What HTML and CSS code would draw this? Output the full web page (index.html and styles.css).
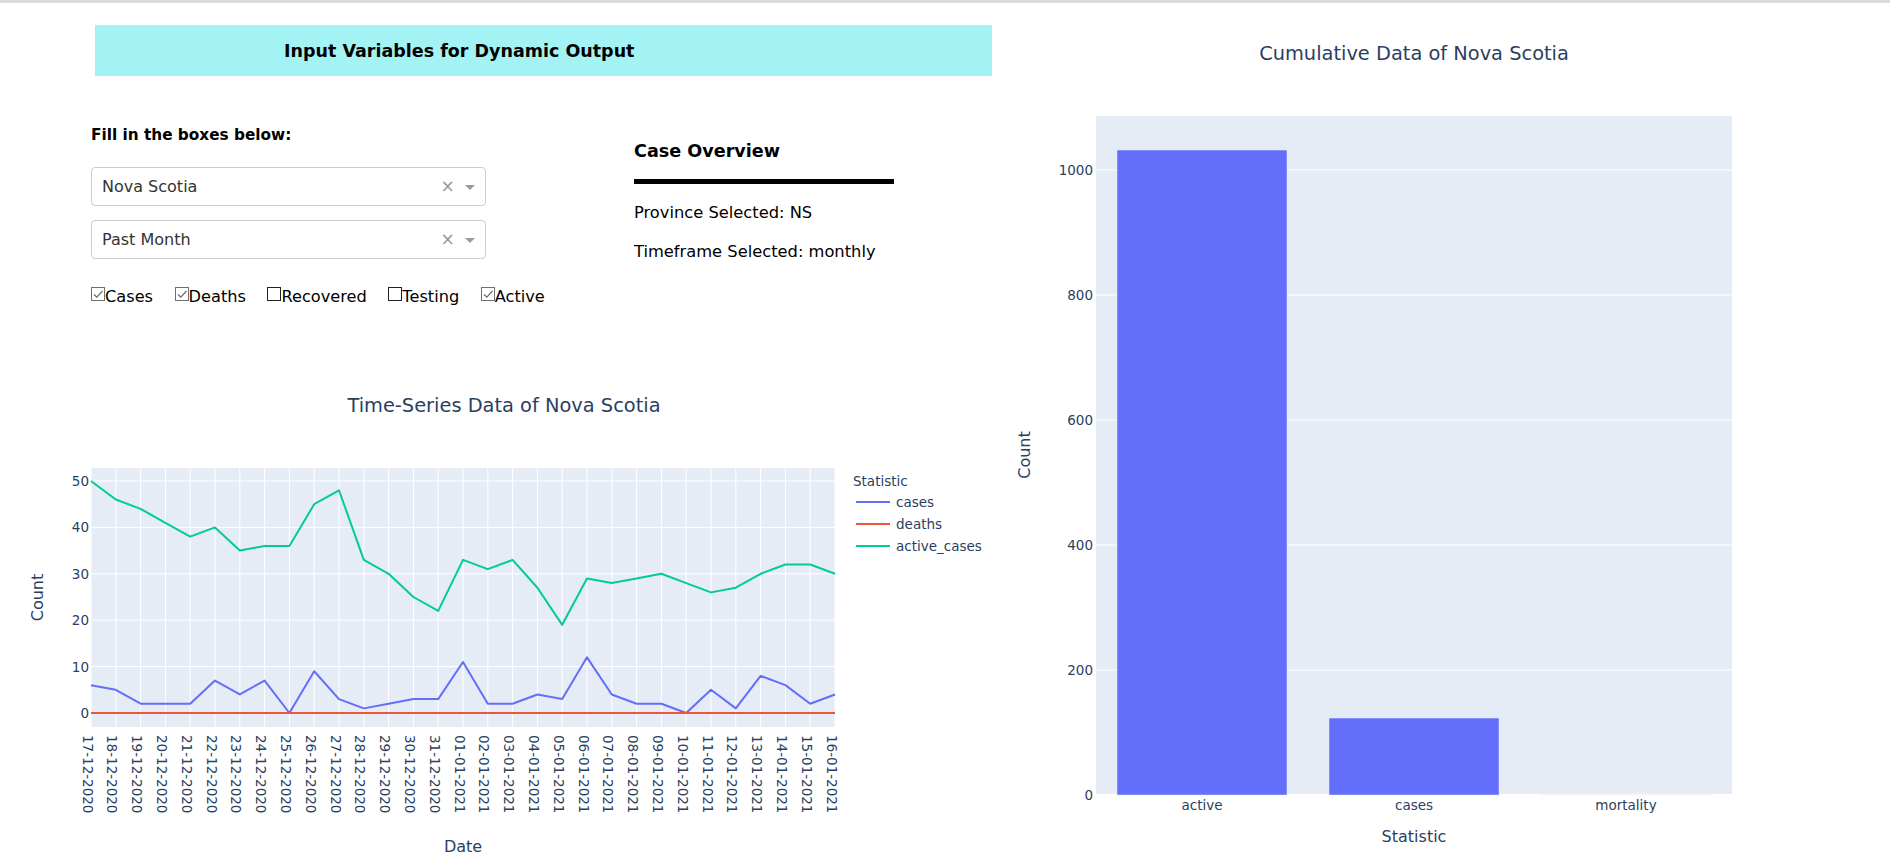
FILE: index.html
```html
<!DOCTYPE html>
<html lang="en">
<head>
<meta charset="utf-8">
<title>Nova Scotia COVID Dashboard</title>
<link rel="stylesheet" href="styles.css">
</head>
<body>
<div class="topbar"></div>
<div class="page">
  <div class="left-col">
    <div class="banner"><h1 class="banner-title">Input Variables for Dynamic Output</h1></div>
    <div class="controls-row">
      <div class="controls">
        <div class="fill-label">Fill in the boxes below:</div>
        <div class="select select-first">
          <span class="select-value">Nova Scotia</span>
          <span class="select-clear">×</span>
          <span class="select-arrow-zone"><span class="select-arrow"></span></span>
        </div>
        <div class="select select-second">
          <span class="select-value">Past Month</span>
          <span class="select-clear">×</span>
          <span class="select-arrow-zone"><span class="select-arrow"></span></span>
        </div>
        <div class="checklist">
          <label class="check-item"><span class="cb-box checked"><svg viewBox="0 0 12 12" class="cb-tick"><polyline points="2,6.5 4.8,9.2 10.5,3"/></svg></span>Cases</label>
          <label class="check-item"><span class="cb-box checked"><svg viewBox="0 0 12 12" class="cb-tick"><polyline points="2,6.5 4.8,9.2 10.5,3"/></svg></span>Deaths</label>
          <label class="check-item"><span class="cb-box"></span>Recovered</label>
          <label class="check-item"><span class="cb-box"></span>Testing</label>
          <label class="check-item"><span class="cb-box checked"><svg viewBox="0 0 12 12" class="cb-tick"><polyline points="2,6.5 4.8,9.2 10.5,3"/></svg></span>Active</label>
        </div>
      </div>
      <div class="overview">
        <h2 class="overview-title">Case Overview</h2>
        <div class="overview-rule"></div>
        <div class="overview-line first">Province Selected: NS</div>
        <div class="overview-line second">Timeframe Selected: monthly</div>
      </div>
    </div>

    <svg class="ts-chart" width="1000" height="500" viewBox="0 363 1000 500" xmlns="http://www.w3.org/2000/svg">
      <text class="plot-title" x="504" y="412" text-anchor="middle">Time-Series Data of Nova Scotia</text>
      <rect class="plot-bg" x="91" y="468" width="744" height="259"/>
      <g transform="translate(91,713) scale(24.8,-4.64)">
        <path class="grid" d="M0,-3.1V52.8M1,-3.1V52.8M2,-3.1V52.8M3,-3.1V52.8M4,-3.1V52.8M5,-3.1V52.8M6,-3.1V52.8M7,-3.1V52.8M8,-3.1V52.8M9,-3.1V52.8M10,-3.1V52.8M11,-3.1V52.8M12,-3.1V52.8M13,-3.1V52.8M14,-3.1V52.8M15,-3.1V52.8M16,-3.1V52.8M17,-3.1V52.8M18,-3.1V52.8M19,-3.1V52.8M20,-3.1V52.8M21,-3.1V52.8M22,-3.1V52.8M23,-3.1V52.8M24,-3.1V52.8M25,-3.1V52.8M26,-3.1V52.8M27,-3.1V52.8M28,-3.1V52.8M29,-3.1V52.8M30,-3.1V52.8"/>
        <path class="grid" d="M0,10H30M0,20H30M0,30H30M0,40H30M0,50H30"/>
        <path class="zeroline" d="M0,0H30"/>
        <polyline class="line-cases" points="0,6 1,5 2,2 3,2 4,2 5,7 6,4 7,7 8,0 9,9 10,3 11,1 12,2 13,3 14,3 15,11 16,2 17,2 18,4 19,3 20,12 21,4 22,2 23,2 24,0 25,5 26,1 27,8 28,6 29,2 30,4"/>
        <polyline class="line-deaths" points="0,0 30,0"/>
        <polyline class="line-active" points="0,50 1,46 2,44 3,41 4,38 5,40 6,35 7,36 8,36 9,45 10,48 11,33 12,30 13,25 14,22 15,33 16,31 17,33 18,27 19,19 20,29 21,28 22,29 23,30 24,28 25,26 26,27 27,30 28,32 29,32 30,30"/>
      </g>
      <g class="tick-text" text-anchor="end">
        <text x="89" y="486">50</text>
        <text x="89" y="532.4">40</text>
        <text x="89" y="578.8">30</text>
        <text x="89" y="625.2">20</text>
        <text x="89" y="671.6">10</text>
        <text x="89" y="718">0</text>
      </g>
      <g class="tick-text">
        <text transform="translate(82.5,735) rotate(90)">17-12-2020</text>
        <text transform="translate(107.3,735) rotate(90)">18-12-2020</text>
        <text transform="translate(132.1,735) rotate(90)">19-12-2020</text>
        <text transform="translate(156.9,735) rotate(90)">20-12-2020</text>
        <text transform="translate(181.7,735) rotate(90)">21-12-2020</text>
        <text transform="translate(206.5,735) rotate(90)">22-12-2020</text>
        <text transform="translate(231.3,735) rotate(90)">23-12-2020</text>
        <text transform="translate(256.1,735) rotate(90)">24-12-2020</text>
        <text transform="translate(280.9,735) rotate(90)">25-12-2020</text>
        <text transform="translate(305.7,735) rotate(90)">26-12-2020</text>
        <text transform="translate(330.5,735) rotate(90)">27-12-2020</text>
        <text transform="translate(355.3,735) rotate(90)">28-12-2020</text>
        <text transform="translate(380.1,735) rotate(90)">29-12-2020</text>
        <text transform="translate(404.9,735) rotate(90)">30-12-2020</text>
        <text transform="translate(429.7,735) rotate(90)">31-12-2020</text>
        <text transform="translate(454.5,735) rotate(90)">01-01-2021</text>
        <text transform="translate(479.3,735) rotate(90)">02-01-2021</text>
        <text transform="translate(504.1,735) rotate(90)">03-01-2021</text>
        <text transform="translate(528.9,735) rotate(90)">04-01-2021</text>
        <text transform="translate(553.7,735) rotate(90)">05-01-2021</text>
        <text transform="translate(578.5,735) rotate(90)">06-01-2021</text>
        <text transform="translate(603.3,735) rotate(90)">07-01-2021</text>
        <text transform="translate(628.1,735) rotate(90)">08-01-2021</text>
        <text transform="translate(652.9,735) rotate(90)">09-01-2021</text>
        <text transform="translate(677.7,735) rotate(90)">10-01-2021</text>
        <text transform="translate(702.5,735) rotate(90)">11-01-2021</text>
        <text transform="translate(727.3,735) rotate(90)">12-01-2021</text>
        <text transform="translate(752.1,735) rotate(90)">13-01-2021</text>
        <text transform="translate(776.9,735) rotate(90)">14-01-2021</text>
        <text transform="translate(801.7,735) rotate(90)">15-01-2021</text>
        <text transform="translate(826.5,735) rotate(90)">16-01-2021</text>
      </g>
      <text class="axis-title" x="463" y="852" text-anchor="middle">Date</text>
      <text class="axis-title" transform="translate(43,597.5) rotate(-90)" text-anchor="middle">Count</text>
      <g class="legend">
        <text class="legend-text" x="853" y="486">Statistic</text>
        <line class="legend-cases" x1="856" y1="502" x2="890" y2="502"/>
        <text class="legend-text" x="896" y="507">cases</text>
        <line class="legend-deaths" x1="856" y1="524" x2="890" y2="524"/>
        <text class="legend-text" x="896" y="529">deaths</text>
        <line class="legend-active" x1="856" y1="546" x2="890" y2="546"/>
        <text class="legend-text" x="896" y="551">active_cases</text>
      </g>
    </svg>
  </div>

  <div class="right-col">
    <svg class="bar-chart" width="890" height="860" viewBox="1000 3 890 860" xmlns="http://www.w3.org/2000/svg">
      <text class="plot-title" x="1414" y="60" text-anchor="middle">Cumulative Data of Nova Scotia</text>
      <rect class="plot-bg" x="1096" y="116" width="636" height="678"/>
      <path class="grid" d="M1096,170H1732M1096,295H1732M1096,420H1732M1096,545H1732M1096,670H1732"/>
      <path class="zeroline-bar" d="M1096,795H1732"/>
      <rect class="bar" x="1117" y="150" width="170" height="645"/>
      <rect class="bar" x="1329" y="718" width="170" height="77"/>
      <path class="bar-flat" d="M1541,795H1711"/>
      <g class="tick-text" text-anchor="end">
        <text x="1093" y="175">1000</text>
        <text x="1093" y="300">800</text>
        <text x="1093" y="425">600</text>
        <text x="1093" y="550">400</text>
        <text x="1093" y="675">200</text>
        <text x="1093" y="800">0</text>
      </g>
      <g class="tick-text" text-anchor="middle">
        <text x="1202" y="810">active</text>
        <text x="1414" y="810">cases</text>
        <text x="1626" y="810">mortality</text>
      </g>
      <text class="axis-title" x="1414" y="842" text-anchor="middle">Statistic</text>
      <text class="axis-title" transform="translate(1030,455) rotate(-90)" text-anchor="middle">Count</text>
    </svg>
  </div>
</div>
</body>
</html>
```

FILE: styles.css
```css
html, body {
  margin: 0;
  padding: 0;
  background: #ffffff;
}

body {
  width: 1890px;
  height: 863px;
  overflow: hidden;
  font-family: "DejaVu Sans", Verdana, sans-serif;
  color: #000;
}

.topbar {
  height: 3px;
  background: #dedbd9;
}

.page {
  display: flex;
  align-items: flex-start;
}

.left-col {
  flex: none;
  width: 1000px;
}

.right-col {
  flex: none;
  width: 890px;
}

.banner {
  box-sizing: border-box;
  margin: 22px 0 0 95px;
  width: 897px;
  height: 51px;
  background: #a3f3f5;
  display: flex;
  align-items: center;
  padding-left: 189px;
}

.banner-title {
  margin: 0;
  font-size: 17.5px;
  font-weight: bold;
  line-height: 22px;
}

.controls-row {
  display: flex;
  padding-left: 91px;
}

.controls {
  width: 395px;
  flex: none;
}

.fill-label {
  margin-top: 50px;
  font-size: 15.3px;
  font-weight: bold;
  line-height: 19px;
}

.select {
  box-sizing: border-box;
  height: 39px;
  border: 1px solid #cccccc;
  border-radius: 4px;
  display: flex;
  align-items: center;
  background: #fff;
}

.select-first {
  margin-top: 22px;
}

.select-second {
  margin-top: 14px;
}

.select-value {
  flex: 1;
  padding-left: 10px;
  font-size: 16px;
  color: #333333;
}

.select-clear {
  width: 17px;
  text-align: center;
  color: #999999;
  font-size: 17px;
  line-height: 1;
}

.select-arrow-zone {
  width: 29px;
  box-sizing: border-box;
  padding-left: 9px;
  display: flex;
  align-items: center;
}

.select-arrow {
  width: 0;
  height: 0;
  border-style: solid;
  border-width: 5px 5px 2.5px;
  border-color: #999999 transparent transparent;
  margin-top: 3px;
}

.checklist {
  margin-top: 28px;
  display: flex;
  font-size: 16.2px;
  line-height: 19px;
}

.check-item {
  display: inline-flex;
  align-items: flex-start;
  margin-right: 21.5px;
}

.cb-box {
  box-sizing: border-box;
  width: 14px;
  height: 14px;
  border: 1px solid #222222;
  background: #fff;
  display: inline-block;
  position: relative;
}

.cb-box.checked {
  border-color: #707070;
}

.cb-tick {
  display: block;
  width: 12px;
  height: 12px;
}

.cb-tick polyline {
  fill: none;
  stroke: #6a6a6a;
  stroke-width: 1.2;
}

.overview {
  margin-left: 148px;
  width: 300px;
}

.overview-title {
  margin: 64px 0 0;
  font-size: 17.6px;
  font-weight: bold;
  line-height: 22px;
}

.overview-rule {
  margin-top: 17px;
  width: 260px;
  height: 5px;
  background: #000;
}

.overview-line {
  font-size: 16.3px;
  line-height: 19px;
}

.overview-line.first {
  margin-top: 19px;
}

.overview-line.second {
  margin-top: 20px;
}

.ts-chart {
  display: block;
  margin-top: 57px;
}

.bar-chart {
  display: block;
}

.plot-title {
  font-family: "DejaVu Sans", Verdana, sans-serif;
  font-size: 19.4px;
  fill: #2a3f5f;
}

.plot-bg {
  fill: #e5ecf6;
}

.grid {
  fill: none;
  stroke: #ffffff;
  stroke-width: 1;
  vector-effect: non-scaling-stroke;
}

.zeroline {
  fill: none;
  stroke: #ffffff;
  stroke-width: 2;
  vector-effect: non-scaling-stroke;
}

.zeroline-bar {
  fill: none;
  stroke: #ffffff;
  stroke-width: 2;
}

.line-cases, .line-deaths, .line-active {
  fill: none;
  stroke-width: 2;
  stroke-linejoin: round;
  vector-effect: non-scaling-stroke;
}

.line-cases { stroke: #636efa; }
.line-deaths { stroke: #ef553b; }
.line-active { stroke: #00cc96; }

.tick-text text {
  font-family: "DejaVu Sans", Verdana, sans-serif;
  font-size: 13.5px;
  fill: #2a3f5f;
}

.axis-title {
  font-family: "DejaVu Sans", Verdana, sans-serif;
  font-size: 16px;
  fill: #2a3f5f;
}

.legend-text {
  font-family: "DejaVu Sans", Verdana, sans-serif;
  font-size: 13.5px;
  fill: #2a3f5f;
}

.legend-cases, .legend-deaths, .legend-active {
  stroke-width: 2;
}

.legend-cases { stroke: #636efa; }
.legend-deaths { stroke: #ef553b; }
.legend-active { stroke: #00cc96; }

.bar {
  fill: #636efa;
  stroke: #e5ecf6;
  stroke-width: 0.5;
}

.bar-flat {
  fill: none;
  stroke: #eef2f9;
  stroke-width: 1;
}
```
